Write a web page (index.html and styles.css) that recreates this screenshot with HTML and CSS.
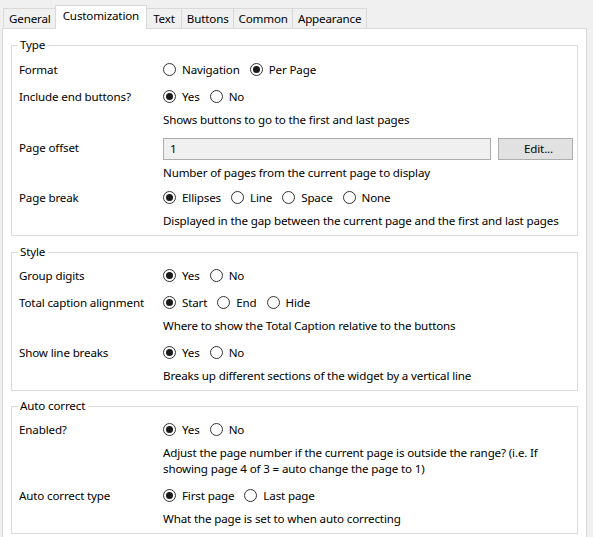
FILE: index.html
```html
<!DOCTYPE html>
<html>
<head>
<meta charset="utf-8">
<link rel="stylesheet" href="styles.css">
</head>
<body>
<div class="window">
  <div class="tabs">
    <div class="tab">General</div>
    <div class="tab active">Customization</div>
    <div class="tab">Text</div>
    <div class="tab narrow">Buttons</div>
    <div class="tab narrow">Common</div>
    <div class="tab">Appearance</div>
  </div>
  <div class="panel">
    <fieldset class="group first">
      <legend>Type</legend>
      <div class="field">
        <div class="label">Format</div>
        <div class="options">
          <span class="opt"><span class="radio"></span>Navigation</span>
          <span class="opt"><span class="radio on"></span>Per Page</span>
        </div>
      </div>
      <div class="field">
        <div class="label">Include end buttons?</div>
        <div class="options">
          <span class="opt"><span class="radio on"></span>Yes</span>
          <span class="opt"><span class="radio"></span>No</span>
        </div>
        <div class="desc">Shows buttons to go to the first and last pages</div>
      </div>
      <div class="field">
        <div class="label tall">Page offset</div>
        <div class="options tall">
          <div class="textbox">1</div>
          <div class="button">Edit...</div>
        </div>
        <div class="desc short">Number of pages from the current page to display</div>
      </div>
      <div class="field">
        <div class="label">Page break</div>
        <div class="options">
          <span class="opt"><span class="radio on"></span>Ellipses</span>
          <span class="opt"><span class="radio"></span>Line</span>
          <span class="opt"><span class="radio"></span>Space</span>
          <span class="opt"><span class="radio"></span>None</span>
        </div>
        <div class="desc">Displayed in the gap between the current page and the first and last pages</div>
      </div>
    </fieldset>

    <fieldset class="group">
      <legend>Style</legend>
      <div class="field">
        <div class="label">Group digits</div>
        <div class="options">
          <span class="opt"><span class="radio on"></span>Yes</span>
          <span class="opt"><span class="radio"></span>No</span>
        </div>
      </div>
      <div class="field">
        <div class="label">Total caption alignment</div>
        <div class="options">
          <span class="opt"><span class="radio on"></span>Start</span>
          <span class="opt"><span class="radio"></span>End</span>
          <span class="opt"><span class="radio"></span>Hide</span>
        </div>
        <div class="desc">Where to show the Total Caption relative to the buttons</div>
      </div>
      <div class="field">
        <div class="label">Show line breaks</div>
        <div class="options">
          <span class="opt"><span class="radio on"></span>Yes</span>
          <span class="opt"><span class="radio"></span>No</span>
        </div>
        <div class="desc">Breaks up different sections of the widget by a vertical line</div>
      </div>
    </fieldset>

    <fieldset class="group">
      <legend>Auto correct</legend>
      <div class="field">
        <div class="label">Enabled?</div>
        <div class="options">
          <span class="opt"><span class="radio on"></span>Yes</span>
          <span class="opt"><span class="radio"></span>No</span>
        </div>
        <div class="desc">Adjust the page number if the current page is outside the range? (i.e. If<br>showing page 4 of 3 = auto change the page to 1)</div>
      </div>
      <div class="field">
        <div class="label">Auto correct type</div>
        <div class="options">
          <span class="opt"><span class="radio on"></span>First page</span>
          <span class="opt"><span class="radio"></span>Last page</span>
        </div>
        <div class="desc">What the page is set to when auto correcting</div>
      </div>
    </fieldset>
  </div>
</div>
</body>
</html>
```

FILE: styles.css
```css
html, body {
  margin: 0;
  padding: 0;
}
body {
  background: #f0f0f0;
  font-family: "Noto Sans", "Open Sans", sans-serif;
  font-size: 11.6px;
  letter-spacing: -0.15px;
  color: #000;
  overflow: hidden;
}
.window {
  width: 593px;
  height: 537px;
}
.tabs {
  display: flex;
  align-items: flex-end;
  height: 23px;
  padding: 5px 0 0 3px;
}
.tab {
  height: 20px;
  line-height: 19px;
  padding: 0 6px;
  border: 1px solid #d9d9d9;
  border-bottom: none;
  background: #f0f0f0;
  box-sizing: border-box;
  margin-left: -1px;
  white-space: nowrap;
}
.tab:first-child {
  margin-left: 0;
  padding: 0 4px 0 5px;
}
.tab:last-child {
  padding: 0 5px;
}
.tab.narrow {
  padding: 0 4px 0 5px;
}
.tab.active {
  height: 24px;
  line-height: 20px;
  background: #fff;
  border-color: #d9d9d9;
  margin-bottom: -1px;
  position: relative;
  z-index: 1;
  padding: 0 7px;
}
.panel {
  margin-left: 2px;
  width: 585px;
  height: 520px;
  box-sizing: border-box;
  background: #fff;
  border: 1px solid #d9d9d9;
  padding: 8px 8px 0 8px;
}
.group {
  border: 1px solid #dcdcdc;
  margin: 0 0 7px 0;
  padding: 5px 6px 2px 7px;
  min-width: 0;
}
.group.first {
  margin-bottom: 8px;
  padding-top: 6px;
}
.group legend {
  padding: 0 3px 0 2px;
  line-height: 16px;
  margin-left: -1px;
}
.field {
  display: grid;
  grid-template-columns: 144px 1fr;
  margin-bottom: 4px;
}
.field:last-child {
  margin-bottom: 0;
}
.label {
  height: 23px;
  line-height: 21px;
  white-space: nowrap;
}
.label.tall, .options.tall {
  height: 25px;
  line-height: 23px;
}
.options {
  height: 23px;
  box-sizing: border-box;
  padding-bottom: 2px;
  display: flex;
  align-items: center;
  gap: 10px;
  white-space: nowrap;
}
.opt {
  display: inline-flex;
  align-items: center;
  gap: 6px;
}
.radio {
  width: 13px;
  height: 13px;
  box-sizing: border-box;
  border: 1px solid #333;
  border-radius: 50%;
  display: inline-flex;
  align-items: center;
  justify-content: center;
  background: #fff;
}
.radio.on::after {
  content: "";
  width: 7px;
  height: 7px;
  border-radius: 50%;
  background: #1a1a1a;
}
.desc {
  grid-column: 2;
  padding: 3px 0 4px;
  line-height: 16px;
  white-space: nowrap;
}
.desc.short {
  padding: 4px 0 2px;
}
.options.tall {
  gap: 7px;
  padding-bottom: 0;
}
.textbox {
  width: 328px;
  height: 22px;
  box-sizing: border-box;
  background: #f0f0f0;
  border: 1px solid #acacac;
  line-height: 19px;
  padding-left: 6px;
}
.button {
  width: 75px;
  height: 22px;
  box-sizing: border-box;
  background: #e1e1e1;
  border: 1px solid #adadad;
  line-height: 19px;
  text-align: center;
  padding-left: 6px;
}
```
